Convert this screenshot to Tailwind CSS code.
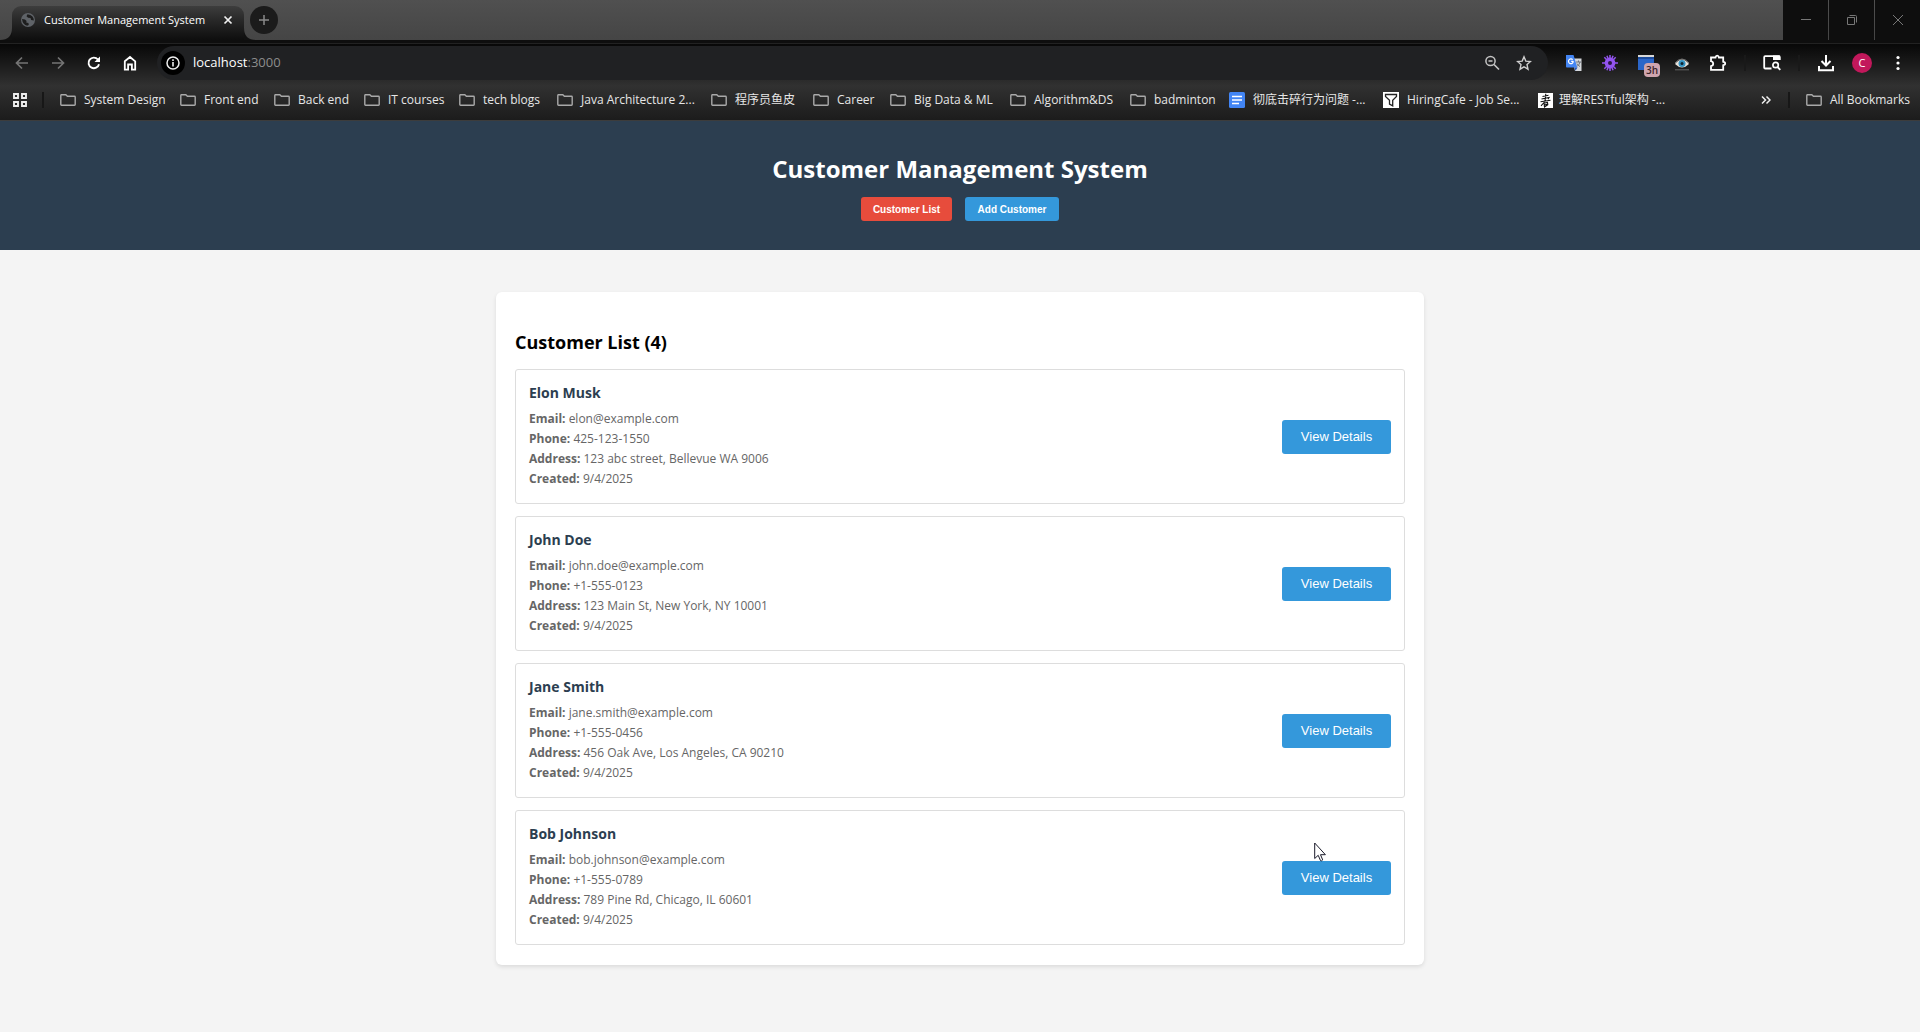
<!DOCTYPE html>
<html lang="en">
<head>
<meta charset="utf-8">
<title>Customer Management System</title>
<script src="https://cdn.jsdelivr.net/npm/@tailwindcss/browser@4"></script>
</head>
<body class="flex min-h-screen flex-col bg-[#f4f4f4] font-['Open_Sans','Noto_Sans_CJK_SC',sans-serif]">
<svg class="hidden">
  <symbol id="folder" viewBox="0 0 16 16"><path d="M1 2.7h4.8l1.6 1.6h7.1q.7 0 .7.7v7.6q0 .7-.7.7H1.5q-.7 0-.7-.7V3.4q0-.7.7-.7z" fill="none" stroke="#a9a9a9" stroke-width="1.4"/></symbol>
</svg>

<div class="text-[12px] text-[#e6e6e6]">
  <!-- tab strip -->
  <div class="flex h-10 items-stretch bg-gradient-to-b from-[#505050] to-[#454545]">
    <div class="relative mt-[6px] ml-3 flex w-[232px] items-center rounded-t-[9px] bg-gradient-to-b from-[#3d3d3d] to-[#0e0e0e] pb-[6px]">
      <svg class="absolute bottom-0 -left-3 size-3" viewBox="0 0 12 12"><path d="M12 0v12H0Q12 12 12 0z" fill="#111"/></svg>
      <svg class="absolute -right-3 bottom-0 size-3" viewBox="0 0 12 12"><path d="M0 0v12h12Q0 12 0 0z" fill="#111"/></svg>
      <svg class="ml-[9px] size-[14px] shrink-0" viewBox="0 0 14 14"><circle cx="7" cy="7" r="7" fill="#5f6368"/><path d="M1 6l3 .4 1.6 1.6-.4 1.4 2.2.6.4 2-1.6.8Q1.600 11.600 1 6zM6.500 1.200l-1 2 1.600 1.600L9.500 5l.6 2 2.800.6Q12.800 2.200 6.500 1.200z" fill="#1e1e1e"/></svg>
      <span class="ml-[9px] grow text-[11px] whitespace-nowrap text-white">Customer Management System</span>
      <button class="mr-[11px] size-[10px] shrink-0" aria-label="Close tab"><svg viewBox="0 0 10 10"><path d="M1.500 1.500l7 7M8.500 1.500l-7 7" stroke="#f0f0f0" stroke-width="1.700"/></svg></button>
    </div>
    <button class="mt-[6px] ml-[6px] flex size-7 items-center justify-center rounded-full bg-[#1b1b1b]" aria-label="New tab"><svg class="size-3" viewBox="0 0 12 12"><path d="M6 1v10M1 6h10" stroke="#8a8a8a" stroke-width="1.500"/></svg></button>
    <div class="ml-auto flex gap-px">
      <button class="flex w-[45px] items-center justify-center bg-[#0e0e0e]" aria-label="Minimize"><svg class="size-3" viewBox="0 0 12 12"><path d="M1 5.500h10" stroke="#777"/></svg></button>
      <button class="flex w-[45px] items-center justify-center bg-[#0e0e0e]" aria-label="Restore"><svg class="size-3" viewBox="0 0 12 12"><path d="M1.500 3.500h7v7h-7zM3.500 1.500h6q1 0 1 1v6" fill="none" stroke="#777"/></svg></button>
      <button class="flex w-[45px] items-center justify-center bg-[#0e0e0e]" aria-label="Close"><svg class="size-3" viewBox="0 0 12 12"><path d="M1 1l10 10M11 1L1 11" stroke="#777"/></svg></button>
    </div>
  </div>
  <div class="h-1 border-b border-[#222] bg-[#0e0e0e]"></div>

  <div class="border-b border-[#3c3c3c] bg-gradient-to-b from-[#080808] via-[#313131] via-55% to-[#1c1c1c]">
    <!-- toolbar -->
    <div class="flex items-center pt-[2px] pr-1 pl-1">
      <button class="flex w-9 justify-center" aria-label="Back"><svg class="size-4" viewBox="0 0 16 16"><path d="M14 8H3M8 2.500L2.500 8 8 13.500" fill="none" stroke="#747474" stroke-width="1.700"/></svg></button>
      <button class="flex w-9 justify-center" aria-label="Forward"><svg class="size-4" viewBox="0 0 16 16"><path d="M2 8h11M8 2.500L13.500 8 8 13.500" fill="none" stroke="#747474" stroke-width="1.700"/></svg></button>
      <button class="flex w-9 justify-center" aria-label="Reload"><svg class="size-4" viewBox="0 0 16 16"><path d="M13 9.200A5.300 5.300 0 1 1 11.900 4.500L13 5.600" fill="none" stroke="#fff" stroke-width="1.900"/><path d="M14 1.500V7H8.500z" fill="#fff"/></svg></button>
      <button class="flex w-9 justify-center" aria-label="Home"><svg class="size-4" viewBox="0 0 16 16"><path d="M2.800 6.300L8 2l5.200 4.300v8.300H9.900V9.500H6.100v5.100H2.800z" fill="none" stroke="#fff" stroke-width="1.800"/></svg></button>
      <div class="ml-[9px] flex h-[34px] grow items-center rounded-full bg-[#202123] pr-2 pl-1">
        <button class="flex size-6 items-center justify-center rounded-full bg-black" aria-label="Site information"><svg class="size-[14px]" viewBox="0 0 14 14"><circle cx="7" cy="7" r="6" fill="none" stroke="#eee" stroke-width="1.500"/><path d="M7 6v4.500M7 3.300v1.600" stroke="#eee" stroke-width="1.600"/></svg></button>
        <span class="ml-2 grow text-[13px] text-white">localhost<span class="text-[#8d8d8d]">:3000</span></span>
        <button class="flex w-8 justify-center" aria-label="Zoom"><svg class="size-4" viewBox="0 0 16 16"><circle cx="6.500" cy="6" r="4.600" fill="none" stroke="#c4c4c4" stroke-width="1.500"/><path d="M4.500 6h4M10 9.500l5 5" stroke="#c4c4c4" stroke-width="1.700"/></svg></button>
        <button class="flex w-8 justify-center" aria-label="Bookmark"><svg class="size-4" viewBox="0 0 16 16"><path d="M8 1.800l1.800 4.300 4.700.4-3.500 3.100 1 4.600L8 11.800l-4 2.400 1-4.600L1.500 6.500l4.700-.4z" fill="none" stroke="#cfcfcf" stroke-width="1.400"/></svg></button>
      </div>
      <div class="ml-2 flex items-center">
        <button class="flex w-9 justify-center" aria-label="Translate"><svg class="size-4" viewBox="0 0 16 16"><path d="M6 3.500h9.500V16H9z" fill="#d5d8dc"/><path d="M10 7h5M12.500 5.500V7M14 7q-.8 3-3 4.500M11 8.500q1 2 3 3" stroke="#6b7078" fill="none"/><path d="M0 0h7.500l3.800 12.500H.8q-.8 0-.8-.8z" fill="#4385f3"/><path d="M8.300 12.500h3.200L9.500 15.800z" fill="#2255bb"/><path d="M7.300 6.300H5.200M6.700 4.700a2.400 2.400 0 1 0 .6 1.600" stroke="#fff" stroke-width="1.200" fill="none"/></svg></button>
        <button class="flex w-9 justify-center" aria-label="Gear extension"><svg class="size-4" viewBox="0 0 16 16"><path d="M8 0v16M0 8h16M2.300 2.300l11.400 11.400M13.700 2.300L2.300 13.700M4.900.7l6.200 14.600M11.100.7L4.900 15.300" stroke="#9354f0" stroke-width="1.500"/><circle cx="8" cy="8" r="5.400" fill="#9354f0"/><circle cx="8" cy="8" r="2" fill="#2a1745"/></svg></button>
        <button class="relative flex w-9 justify-center" aria-label="Timer extension"><svg class="size-4" viewBox="0 0 16 16"><path d="M0 0h16v15H0z" fill="#2b66c9"/><path d="M0 0h16v2H0z" fill="#d8d8d8"/><path d="M0 2h16v2H0z" fill="#1b4b9c"/></svg><span class="absolute top-2 left-4 h-[14px] rounded-[4px] bg-[#cfa5ae] px-[2px] text-[10px] leading-[14px] font-semibold text-[#3a2228]">3h</span></button>
        <button class="flex w-9 justify-center" aria-label="Eye extension"><svg class="size-4" viewBox="0 0 16 16"><path d="M1 9q7-9 14 0-7 7-14 0z" fill="#e9e3dc"/><path d="M1 8q7-8 14 0" stroke="#777" fill="none"/><circle cx="8" cy="8.500" r="3.500" fill="#3594c4"/><circle cx="8" cy="8.500" r="1.500" fill="#102430"/><path d="M1 14.800h14" stroke="#666"/></svg></button>
        <button class="flex w-9 justify-center" aria-label="Extensions"><svg class="size-[18px]" viewBox="0 0 18 18"><path d="M2 3.500h4.500q.3-1.800 1.700-1.800t1.700 1.800h4.300v4.300q2 .2 2 1.700t-2 1.700v4.600H2v-3.600q2.200-.6 2.200-2.500T2 7.200z" fill="none" stroke="#fff" stroke-width="1.800"/></svg></button>
        <span class="mx-2 h-4 w-[2px] bg-[#191919]"></span>
        <button class="flex w-9 justify-center" aria-label="Search this page"><svg class="size-[18px]" viewBox="0 0 18 18"><path d="M8.500 14.500H2.200q-1 0-1-1V3.200q0-1 1-1h13.600q1 0 1 1V6" fill="none" stroke="#fff" stroke-width="1.800"/><path d="M10 1.500h7V6h-7z" fill="#fff"/><circle cx="12.600" cy="11" r="2.700" fill="none" stroke="#fff" stroke-width="1.700"/><path d="M14.500 13l2.800 2.800" stroke="#fff" stroke-width="1.800"/></svg></button>
        <span class="mx-2 h-4 w-[2px] bg-[#191919]"></span>
        <button class="flex w-9 justify-center" aria-label="Downloads"><svg class="size-[18px]" viewBox="0 0 18 18"><path d="M9 1v10M4.500 7L9 11.500 13.500 7M2 12v4.200h14V12" fill="none" stroke="#fff" stroke-width="2"/></svg></button>
        <button class="flex w-9 justify-center" aria-label="Profile"><span class="flex size-5 items-center justify-center rounded-full bg-[#c2185b] text-[11px] text-white">C</span></button>
        <button class="flex w-9 justify-center" aria-label="Menu"><svg class="size-4" viewBox="0 0 16 16"><g fill="#fff"><circle cx="8" cy="2.500" r="1.600"/><circle cx="8" cy="8" r="1.600"/><circle cx="8" cy="13.500" r="1.600"/></g></svg></button>
      </div>
    </div>
    <!-- bookmarks bar -->
    <nav class="flex h-10 items-center pr-[14px] pl-3 whitespace-nowrap" aria-label="Bookmarks">
      <button class="w-[30px]" aria-label="Apps"><svg class="size-4" viewBox="0 0 16 16"><path d="M2 2h4v4H2zM10 2h4v4h-4zM2 10h4v4H2zM10 10h4v4h-4z" fill="none" stroke="#eee" stroke-width="1.900"/></svg></button>
      <span class="mr-4 h-4 w-[2px] bg-[#171717]"></span>
      <a href="#" class="flex w-[120px] items-center gap-2"><svg class="size-4 shrink-0"><use href="#folder"/></svg>System Design</a>
      <a href="#" class="flex w-[94px] items-center gap-2"><svg class="size-4 shrink-0"><use href="#folder"/></svg>Front end</a>
      <a href="#" class="flex w-[90px] items-center gap-2"><svg class="size-4 shrink-0"><use href="#folder"/></svg>Back end</a>
      <a href="#" class="flex w-[95px] items-center gap-2"><svg class="size-4 shrink-0"><use href="#folder"/></svg>IT courses</a>
      <a href="#" class="flex w-[98px] items-center gap-2"><svg class="size-4 shrink-0"><use href="#folder"/></svg>tech blogs</a>
      <a href="#" class="flex w-[154px] items-center gap-2"><svg class="size-4 shrink-0"><use href="#folder"/></svg>Java Architecture 2...</a>
      <a href="#" class="flex w-[102px] items-center gap-2"><svg class="size-4 shrink-0"><use href="#folder"/></svg>程序员鱼皮</a>
      <a href="#" class="flex w-[77px] items-center gap-2"><svg class="size-4 shrink-0"><use href="#folder"/></svg>Career</a>
      <a href="#" class="flex w-[120px] items-center gap-2"><svg class="size-4 shrink-0"><use href="#folder"/></svg>Big Data &amp; ML</a>
      <a href="#" class="flex w-[120px] items-center gap-2"><svg class="size-4 shrink-0"><use href="#folder"/></svg>Algorithm&amp;DS</a>
      <a href="#" class="flex w-[99px] items-center gap-2"><svg class="size-4 shrink-0"><use href="#folder"/></svg>badminton</a>
      <a href="#" class="flex w-[154px] items-center gap-2"><svg class="size-4 shrink-0" viewBox="0 0 16 16"><rect width="16" height="16" rx="1.500" fill="#4285f4"/><path d="M3 4.500h10M3 8h10M3 11.500h7" stroke="#fff" stroke-width="1.700"/></svg>彻底击碎行为问题 -...</a>
      <a href="#" class="flex w-[155px] items-center gap-2"><svg class="size-4 shrink-0" viewBox="0 0 16 16"><path d="M0 0h16v16H0z" fill="#fff"/><path d="M2.500 2.500h11v2L9.700 8.300v5.500L6.500 12V8.300L2.500 4.500z" fill="none" stroke="#222" stroke-width="1.300"/></svg>HiringCafe - Job Se...</a>
      <a href="#" class="flex items-center gap-[6px]"><svg class="size-[15px] shrink-0" viewBox="0 0 15 15"><path d="M0 0h15v15H0z" fill="#fff"/><path d="M4.500 3.500l6-1.300M7.800.8L7 8M3.500 6l7.500-1.500-1 1.600M2.500 8.700l10-1.500M6.500 9L3 12.800M5.500 10.300l4-.8.3 2.300-3.300 2.200-.4-3.500M6.300 12l3-.6" fill="none" stroke="#111" stroke-width="1.100"/></svg>理解RESTful架构 -...</a>
      <button class="mr-[17px] ml-auto flex w-[10px]" aria-label="More bookmarks"><svg class="w-[10px]" viewBox="0 0 10 10"><path d="M1 1.500L4.500 5 1 8.500M5.500 1.500L9 5 5.500 8.500" fill="none" stroke="#eee" stroke-width="1.500"/></svg></button>
      <span class="mr-4 h-4 w-[2px] bg-[#171717]"></span>
      <a href="#" class="flex w-[100px] items-center gap-2"><svg class="size-4 shrink-0"><use href="#folder"/></svg>All Bookmarks</a>
    </nav>
  </div>
</div>

<header class="flex flex-col items-center bg-[#2c3e50] pt-[30px] pb-[29px]">
  <h1 class="text-[24px] leading-9 font-bold text-white">Customer Management System</h1>
  <div class="mt-[10px] flex gap-[13px] font-['Liberation_Sans',sans-serif] text-[10px] font-bold text-white">
    <button class="h-6 w-[91px] rounded-[3px] bg-[#e74c3c]">Customer List</button>
    <button class="h-6 w-[94px] rounded-[3px] bg-[#3498db]">Add Customer</button>
  </div>
</header>

<main class="relative mx-auto mt-[42px] w-full max-w-[928px] rounded-[6px] bg-white px-[19px] pt-[35px] pb-5 shadow-[0_2px_4px_rgba(0,0,0,0.1)]">
  <h2 class="mb-3 text-[18px] leading-[30px] font-bold text-black">Customer List (4)</h2>
  <div id="list" class="flex flex-col gap-3"></div>
  <svg class="absolute top-[550px] right-[97px] h-5 w-[13px]" viewBox="0 0 13 20"><path d="M.7 1v15.500l3.500-3.200 2.300 5.300q1 .8 2.200-.7l-2.200-5.200h4.900z" fill="#fff" stroke="#1b1b2b"/></svg>
</main>

<template id="row">
  <article class="flex h-[135px] items-center justify-between rounded-[3px] border border-[#ddd] px-[13px]">
    <div class="pb-[3px] text-[12px] leading-5 text-[#666]">
      <h3 class="mb-1 text-[14px] leading-6 font-bold text-[#2c3e50]"></h3>
      <p><b>Email:</b> <span></span></p>
      <p><b>Phone:</b> <span></span></p>
      <p><b>Address:</b> <span></span></p>
      <p><b>Created:</b> <span></span></p>
    </div>
    <button class="h-[34px] w-[109px] rounded-[3px] bg-[#3498db] font-['Liberation_Sans',sans-serif] text-[13px] text-white">View Details</button>
  </article>
</template>
<script>
  const customers = [
    ['Elon Musk', 'elon@example.com', '425-123-1550', '123 abc street, Bellevue WA 9006', '9/4/2025'],
    ['John Doe', 'john.doe@example.com', '+1-555-0123', '123 Main St, New York, NY 10001', '9/4/2025'],
    ['Jane Smith', 'jane.smith@example.com', '+1-555-0456', '456 Oak Ave, Los Angeles, CA 90210', '9/4/2025'],
    ['Bob Johnson', 'bob.johnson@example.com', '+1-555-0789', '789 Pine Rd, Chicago, IL 60601', '9/4/2025'],
  ];
  for (const [name, ...fields] of customers) {
    const row = document.getElementById('row').content.cloneNode(true);
    row.querySelector('h3').textContent = name;
    row.querySelectorAll('p span').forEach((span, i) => span.textContent = fields[i]);
    document.getElementById('list').append(row);
  }
</script>
</body>
</html>
